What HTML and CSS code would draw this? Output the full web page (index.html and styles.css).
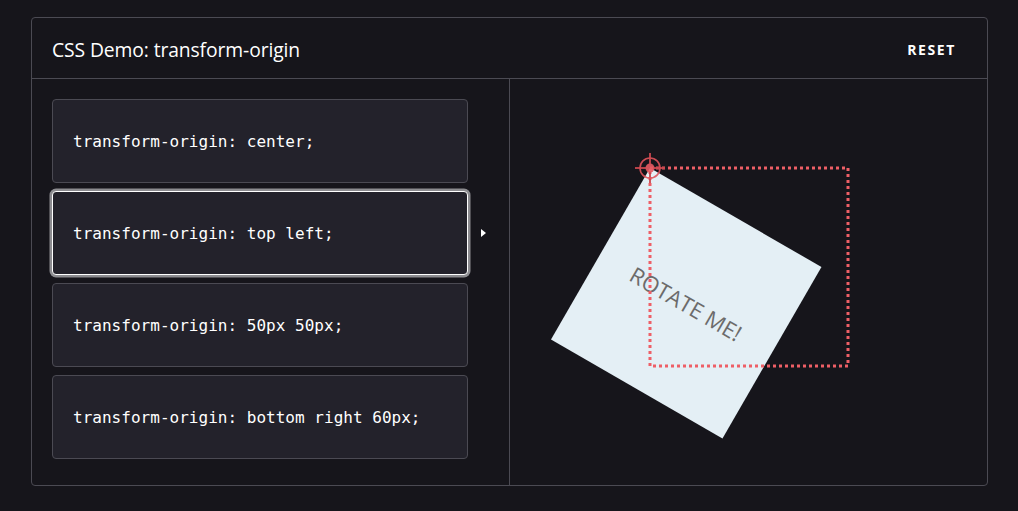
FILE: index.html
```html
<!DOCTYPE html>
<html lang="en">
<head>
<meta charset="utf-8">
<title>CSS Demo: transform-origin</title>
<link rel="stylesheet" href="styles.css">
</head>
<body>
<section class="demo">
  <header class="demo-header">
    <h1 class="demo-title">CSS Demo: transform-origin</h1>
    <button class="reset" type="button">RESET</button>
  </header>
  <div class="demo-body">
    <div class="choices">
      <div class="choice"><code>transform-origin: center;</code></div>
      <div class="choice selected"><code>transform-origin: top left;</code><span class="arrow"></span></div>
      <div class="choice"><code>transform-origin: 50px 50px;</code></div>
      <div class="choice"><code>transform-origin: bottom right 60px;</code></div>
    </div>
    <div class="output">
      <div class="stage">
        <div class="rotated"><span>ROTATE ME!</span></div>
        <svg class="outline" width="198" height="198" viewBox="0 0 198 198">
          <rect x="0" y="0" width="198" height="198" fill="none" stroke="#ee5f66" stroke-width="3" stroke-dasharray="3 3"/>
        </svg>
        <svg class="crosshair" width="34" height="34" viewBox="-17 -17 34 34">
          <line x1="-15" y1="0" x2="15" y2="0" stroke="#c9464d" stroke-width="2"/>
          <line x1="0" y1="-15" x2="0" y2="15" stroke="#c9464d" stroke-width="2"/>
          <circle cx="0" cy="0" r="10" fill="none" stroke="#e0535b" stroke-width="1.6"/>
          <circle cx="0" cy="0" r="4.5" fill="#e65a62"/>
        </svg>
      </div>
    </div>
  </div>
</section>
</body>
</html>
```
FILE: styles.css
```css
* { box-sizing: border-box; }

html, body {
  margin: 0;
  padding: 0;
  background: #16151b;
}

body {
  padding: 17px 30px 0 31px;
  font-family: "Open Sans", "Noto Sans", sans-serif;
  color: #ffffff;
}

.demo {
  border: 1px solid #4b4a53;
  border-radius: 4px;
  height: 469px;
  display: flex;
  flex-direction: column;
}

.demo-header {
  height: 61px;
  border-bottom: 1px solid #4b4a53;
  display: flex;
  align-items: center;
  justify-content: space-between;
  padding: 2px 32px 0 20px;
}

.demo-title {
  margin: 0;
  font-size: 19.3px;
  font-weight: 400;
  color: #ffffff;
  letter-spacing: -0.1px;
}

.reset {
  background: none;
  border: 0;
  color: #ffffff;
  font-family: "Open Sans", "Noto Sans", sans-serif;
  font-size: 14px;
  font-weight: 700;
  letter-spacing: 1.6px;
  padding: 0;
  margin-right: -1px;
}

.demo-body {
  flex: 1;
  display: grid;
  grid-template-columns: 478px 1fr;
}

.choices {
  border-right: 1px solid #4b4a53;
  padding: 20px 41px 24px 20px;
  display: flex;
  flex-direction: column;
  gap: 8px;
}

.choice {
  position: relative;
  height: 84px;
  background: #23222b;
  border: 1px solid #4b4a53;
  border-radius: 4px;
  display: flex;
  align-items: center;
  padding-left: 20px;
}

.choice code {
  font-family: "DejaVu Sans Mono", "Liberation Mono", monospace;
  font-size: 16px;
  color: #ffffff;
  letter-spacing: 0.02px;
}

.choice.selected {
  border: 1.5px solid #ffffff;
  box-shadow: 0 0 0 2.5px #8c8c90;
}

.arrow {
  position: absolute;
  right: -19px;
  top: 50%;
  margin-top: -4px;
  width: 0;
  height: 0;
  border-top: 4px solid transparent;
  border-bottom: 4px solid transparent;
  border-left: 5px solid #ffffff;
}

.output {
  display: flex;
  justify-content: center;
  align-items: flex-start;
  padding-top: 89px;
}

.stage {
  position: relative;
  width: 198px;
  height: 198px;
}

.rotated {
  position: absolute;
  top: 0;
  left: 0;
  width: 198px;
  height: 198px;
  background: #e4eff5;
  transform-origin: top left;
  transform: rotate(30deg);
  display: flex;
  align-items: center;
  justify-content: center;
}

.rotated span {
  font-family: "Open Sans", "Noto Sans", sans-serif;
  font-size: 22px;
  color: #6c6b6b;
}

.outline {
  position: absolute;
  top: 0;
  left: 0;
  overflow: visible;
}

.crosshair {
  position: absolute;
  top: -17px;
  left: -17px;
  opacity: 0.9;
}
```
